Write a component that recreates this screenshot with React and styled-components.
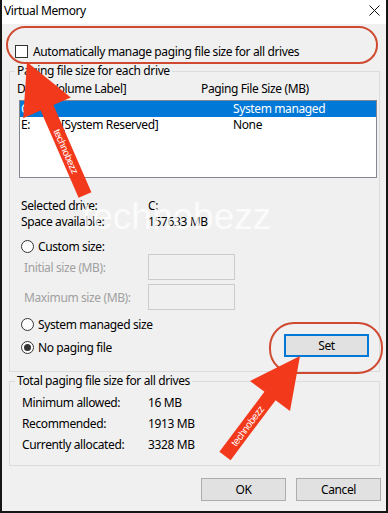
import React from 'react';
import styled, { createGlobalStyle } from 'styled-components';

const GlobalStyle = createGlobalStyle`
  html, body {
    margin: 0;
    padding: 0;
    background: #ffffff;
  }
  body {
    font-family: "Noto Sans", "Segoe UI", sans-serif;
    font-size: 12px;
    letter-spacing: -0.38px;
    color: #000;
  }
`;

const Window = styled.div`
  position: relative;
  box-sizing: border-box;
  width: 388px;
  height: 513px;
  background: #f0f0f0;
  border-left: 2px solid #161616;
  border-right: 2px solid #161616;
  border-bottom: 2px solid #161616;
  overflow: hidden;
`;

const TitleBar = styled.div`
  height: 24px;
  background: #fff;
  display: flex;
  align-items: center;
  justify-content: space-between;
  padding: 0 6px 4px 2px;
  box-sizing: border-box;
`;

const Body = styled.div`
  padding: 0 6px 0 7px;
  display: flex;
  flex-direction: column;
`;

const CheckRow = styled.label`
  display: flex;
  align-items: center;
  gap: 5px;
  height: 13px;
  margin: 21px 0 0 6px;
  line-height: 15px;
`;

const CheckBox = styled.span`
  width: 13px;
  height: 13px;
  box-sizing: border-box;
  border: 1px solid #333;
  background: #fff;
  flex: none;
`;

const Group = styled.fieldset`
  margin: ${p => p.$top}px 0 0 0;
  padding: 0;
  border: 1px solid #dcdcdc;
  min-width: 0;
`;

const Legend = styled.legend`
  padding: 0 2px;
  margin-left: 5px;
  line-height: 14px;
`;

const GroupBody = styled.div`
  padding: ${p => p.$pad};
`;

const Header = styled.div`
  display: flex;
  line-height: 15px;
  margin-top: 3px;
  margin-left: -1px;
`;

const HeadCell = styled.span`
  width: ${p => p.$w || 'auto'};
`;

const ListBox = styled.div`
  margin: 4px 2px 0 1px;
  height: 78px;
  box-sizing: border-box;
  border: 1px solid #828790;
  background: #fff;
`;

const ListRow = styled.div`
  display: grid;
  grid-template-columns: 40px 172px 1fr;
  padding-left: 1px;
  height: 16px;
  line-height: 16px;
  background: ${p => (p.$selected ? '#0078d7' : 'transparent')};
  color: ${p => (p.$selected ? '#fff' : '#000')};
`;

const InfoRow = styled.div`
  display: grid;
  grid-template-columns: ${p => p.$label}px 1fr;
  height: 16px;
  line-height: 16px;
  margin-top: ${p => p.$top || 0}px;
  padding-left: ${p => p.$indent || 0}px;
`;

const RadioRow = styled.div`
  display: flex;
  align-items: center;
  gap: 4px;
  height: ${p => p.$h || 16}px;
  margin-top: ${p => p.$top || 0}px;
  padding-left: 3px;
`;

const Radio = styled.span`
  width: 13px;
  height: 13px;
  box-sizing: border-box;
  border-radius: 50%;
  border: 1px solid #333;
  background: #fff;
  display: flex;
  align-items: center;
  justify-content: center;
  flex: none;

  &::after {
    content: '';
    display: ${p => (p.$checked ? 'block' : 'none')};
    width: 7px;
    height: 7px;
    border-radius: 50%;
    background: #333;
  }
`;

const FieldRow = styled.div`
  display: grid;
  grid-template-columns: 124px 87px;
  align-items: center;
  height: 26px;
  margin-top: ${p => p.$top || 0}px;
  padding-left: 6px;
  color: #a0a0a0;
`;

const FieldBox = styled.span`
  height: 26px;
  box-sizing: border-box;
  border: 1px solid #cccccc;
  background: #f0f0f0;
`;

const SetArea = styled.div`
  display: flex;
  justify-content: space-between;
  align-items: flex-start;
  margin-top: 6px;
`;

const Column = styled.div`
  display: flex;
  flex-direction: column;
`;

const Button = styled.button`
  box-sizing: border-box;
  width: ${p => p.$w}px;
  height: 23px;
  font: inherit;
  letter-spacing: inherit;
  color: #000;
  background: #e1e1e1;
  border: ${p => (p.$default ? '2px solid #0078d7' : '1px solid #adadad')};
  padding: 0;
  margin: ${p => p.$margin || 0};
`;

const ButtonBar = styled.div`
  display: flex;
  justify-content: flex-end;
  gap: 10px;
  margin-top: 12px;
  margin-right: -1px;
`;

const Overlay = styled.svg`
  position: absolute;
  left: -2px;
  top: 0;
  width: 388px;
  height: 513px;
  pointer-events: none;
`;

const Watermark = styled.span`
  position: absolute;
  left: 80px;
  top: 197px;
  font-family: "Liberation Sans", Arial, sans-serif;
  font-size: 37px;
  letter-spacing: 0;
  line-height: 40px;
  color: rgba(255, 255, 255, 0.75);
  pointer-events: none;
  white-space: nowrap;
`;

const red = '#f2391b';

const Arrow = ({ tip, dir, head = 50, half = 26, shaft = 7, len, label, flip }) => {
  const [tx, ty] = tip;
  const [dx, dy] = dir;
  const px = -dy;
  const py = dx;
  const bx = tx + dx * head;
  const by = ty + dy * head;
  const ex = tx + dx * len;
  const ey = ty + dy * len;
  const pts = [
    [tx, ty],
    [bx + px * half, by + py * half],
    [bx + px * shaft, by + py * shaft],
    [ex + px * shaft, ey + py * shaft],
    [ex - px * shaft, ey - py * shaft],
    [bx - px * shaft, by - py * shaft],
    [bx - px * half, by - py * half],
  ]
    .map(p => p.map(v => v.toFixed(1)).join(','))
    .join(' ');
  const mx = tx + dx * (head + len) / 2;
  const my = ty + dy * (head + len) / 2;
  let ang = (Math.atan2(dy, dx) * 180) / Math.PI;
  if (flip) ang += 180;
  return (
    <g>
      <polygon points={pts} fill={red} />
      <text
        x={mx}
        y={my}
        fill="#fff"
        fontSize="10"
        fontFamily="Liberation Sans, Arial, sans-serif"
        textAnchor="middle"
        dominantBaseline="central"
        transform={`rotate(${ang.toFixed(1)} ${mx.toFixed(1)} ${my.toFixed(1)})`}
      >
        {label}
      </text>
    </g>
  );
};

const CloseIcon = () => (
  <svg width="11" height="11" viewBox="0 0 11 11">
    <path d="M0.5 0.5 L10.5 10.5 M10.5 0.5 L0.5 10.5" stroke="#111" strokeWidth="1" fill="none" />
  </svg>
);

const App = () => {
  return (
    <React.Fragment>
      <GlobalStyle />
      <Window>
        <TitleBar>
          <span>Virtual Memory</span>
          <CloseIcon />
        </TitleBar>
        <Body>
          <CheckRow>
            <CheckBox />
            <span>Automatically manage paging file size for all drives</span>
          </CheckRow>

          <Group $top={6}>
            <Legend>Paging file size for each drive</Legend>
            <GroupBody $pad="0 0 14px 8px">
              <Header>
                <HeadCell $w="184px">Drive [Volume Label]</HeadCell>
                <HeadCell>Paging File Size (MB)</HeadCell>
              </Header>
              <ListBox>
                <ListRow $selected>
                  <span>C:</span>
                  <span></span>
                  <span>System managed</span>
                </ListRow>
                <ListRow>
                  <span>E:</span>
                  <span>[System Reserved]</span>
                  <span>None</span>
                </ListRow>
              </ListBox>

              <InfoRow $label={127} $top={20} $indent={3}>
                <span>Selected drive:</span>
                <span>C:</span>
              </InfoRow>
              <InfoRow $label={127} $indent={3}>
                <span>Space available:</span>
                <span>157633 MB</span>
              </InfoRow>

              <RadioRow $top={9} $h={15}>
                <Radio />
                <span>Custom size:</span>
              </RadioRow>
              <FieldRow>
                <span>Initial size (MB):</span>
                <FieldBox />
              </FieldRow>
              <FieldRow $top={4}>
                <span>Maximum size (MB):</span>
                <FieldBox />
              </FieldRow>

              <SetArea>
                <Column>
                  <RadioRow>
                    <Radio />
                    <span>System managed size</span>
                  </RadioRow>
                  <RadioRow $top={7}>
                    <Radio $checked />
                    <span>No paging file</span>
                  </RadioRow>
                </Column>
                <Button $w={85} $default $margin="18px 10px 0 0">Set</Button>
              </SetArea>
            </GroupBody>
          </Group>

          <Group $top={2}>
            <Legend>Total paging file size for all drives</Legend>
            <GroupBody $pad="7px 0 12px 12px">
              <InfoRow $label={126}>
                <span>Minimum allowed:</span>
                <span>16 MB</span>
              </InfoRow>
              <InfoRow $label={126} $top={5}>
                <span>Recommended:</span>
                <span>1913 MB</span>
              </InfoRow>
              <InfoRow $label={126} $top={5}>
                <span>Currently allocated:</span>
                <span>3328 MB</span>
              </InfoRow>
            </GroupBody>
          </Group>

          <ButtonBar>
            <Button $w={85}>OK</Button>
            <Button $w={85}>Cancel</Button>
          </ButtonBar>
        </Body>

        <Watermark>technobezz</Watermark>

        <Overlay viewBox="0 0 388 513">
          <rect x="7" y="27" width="370" height="36" rx="18" fill="none" stroke="#cf4a31" strokeWidth="2" />
          <rect x="270" y="323" width="112" height="50" rx="24" fill="none" stroke="#cf4a31" strokeWidth="2" />
          <Arrow tip={[27, 62]} dir={[0.4, 0.917]} len={145} label="technobezz" />
          <Arrow tip={[300, 356]} dir={[-0.6, 0.8]} head={50} half={25} len={125} label="technobezz" flip />
        </Overlay>
      </Window>
    </React.Fragment>
  );
};

export default App;
